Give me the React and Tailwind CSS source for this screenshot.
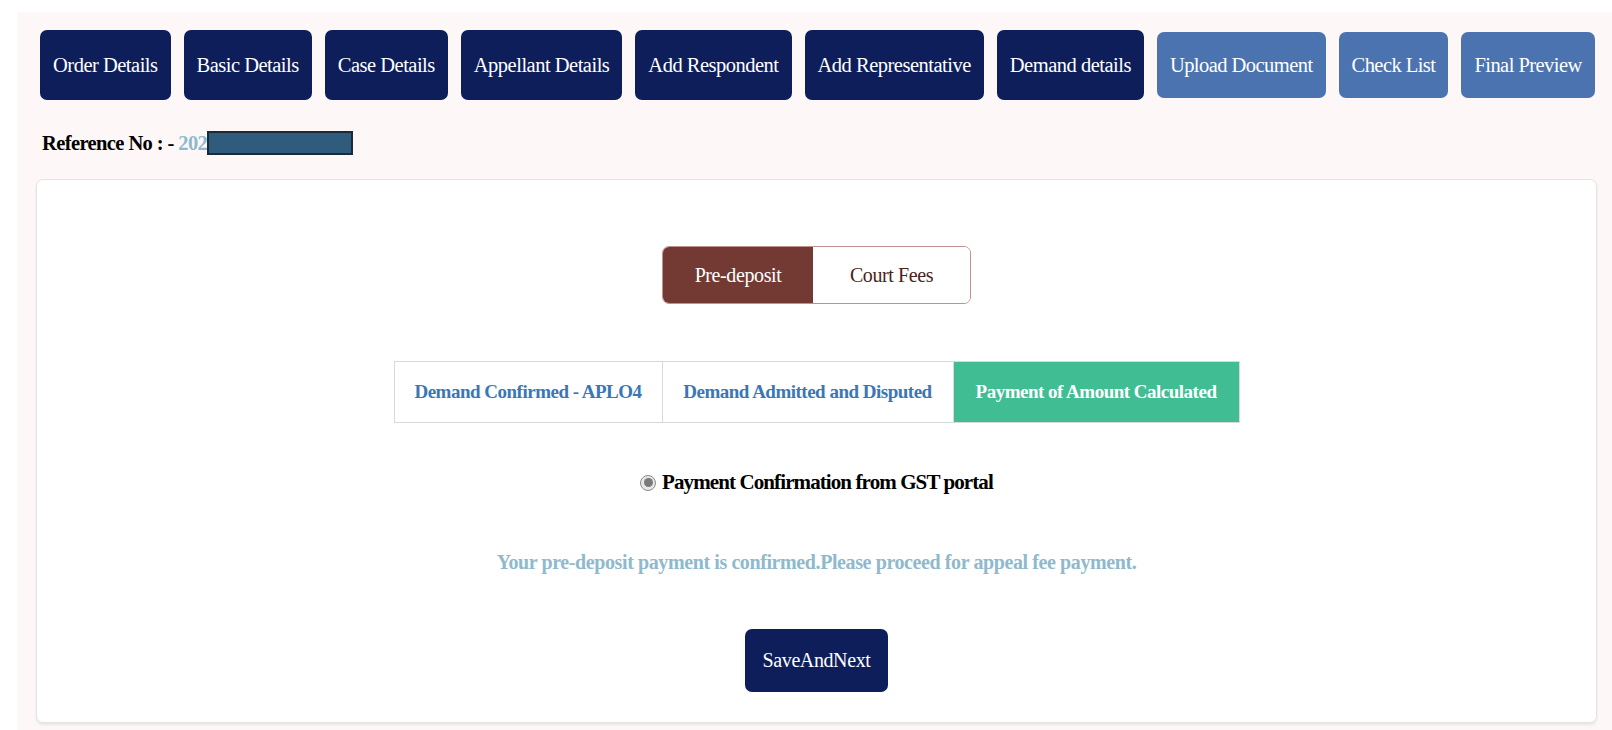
import React from "react";

const navItems = [
  { label: "Order Details", light: false },
  { label: "Basic Details", light: false },
  { label: "Case Details", light: false },
  { label: "Appellant Details", light: false },
  { label: "Add Respondent", light: false },
  { label: "Add Representative", light: false },
  { label: "Demand details", light: false },
  { label: "Upload Document", light: true },
  { label: "Check List", light: true },
  { label: "Final Preview", light: true },
];

export default function App() {
  return (
    <div className="min-h-screen bg-white pt-[12px] pl-[17px] font-['Liberation_Serif',serif]">
      <div className="min-h-[718px] bg-[#fdf8f7] pl-[19px] pr-[15px] pt-[18px]">
        <div className="flex items-center gap-[13px] pl-[4px]">
          {navItems.map((n) =>
            n.light ? (
              <div
                key={n.label}
                className="h-[66px] px-[13px] flex items-center rounded-[7px] bg-[#4a73b0] text-white text-[20.5px] tracking-[-0.55px] whitespace-nowrap"
              >
                {n.label}
              </div>
            ) : (
              <div
                key={n.label}
                className="h-[70px] px-[13px] flex items-center rounded-[7px] bg-[#0d1e5a] text-white text-[20.5px] tracking-[-0.5px] whitespace-nowrap"
              >
                {n.label}
              </div>
            )
          )}
        </div>

        <div className="flex items-center h-[24px] mt-[31px] pl-[6px] font-bold text-[20.5px] tracking-[-0.6px]">
          <span className="text-black">Reference No : -&nbsp;</span>
          <span className="text-[#8fb9cc]">202</span>
          <span className="inline-block w-[146px] h-[24px] bg-[#2f5c7c] border-2 border-[#1a2a36]"></span>
        </div>

        <div className="mt-[24px] bg-white border border-[#e4e4e4] rounded-[7px] shadow-[0_2px_3px_rgba(0,0,0,0.08)] flex flex-col items-center pt-[66px] pb-[30px]">
          <div className="flex h-[58px] rounded-[7px] border border-[#c0928d] overflow-hidden text-[20px] tracking-[-0.4px]">
            <div className="w-[150px] flex items-center justify-center bg-[#733a33] text-white">
              Pre-deposit
            </div>
            <div className="w-[157px] flex items-center justify-center bg-white text-[#4a2420]">
              Court Fees
            </div>
          </div>

          <div className="mt-[57px] flex h-[62px] border border-[#d9d9d9] text-[19px] font-bold tracking-[-0.5px]">
            <div className="w-[268px] flex items-center justify-center text-[#3a77b6] border-r border-[#d9d9d9]">
              Demand Confirmed - APLO4
            </div>
            <div className="w-[291px] flex items-center justify-center text-[#3a77b6] border-r border-[#d9d9d9]">
              Demand Admitted and Disputed
            </div>
            <div className="w-[285px] flex items-center justify-center bg-[#41bd93] text-white">
              Payment of Amount Calculated
            </div>
          </div>

          <div className="mt-[44px] flex items-center gap-[6px]">
            <span className="w-[16px] h-[16px] rounded-full border border-[#8a8a8a] bg-[#e8e8e8] flex items-center justify-center">
              <span className="w-[9px] h-[9px] rounded-full bg-[#7a7a7a]"></span>
            </span>
            <span className="text-[21px] font-bold text-black tracking-[-0.9px]">
              Payment Confirmation from GST portal
            </span>
          </div>

          <div className="mt-[48px] text-[20px] font-bold text-[#8fb9cc] tracking-[-0.4px]">
            Your pre-deposit payment is confirmed.Please proceed for appeal fee payment.
          </div>

          <div className="mt-[52px] h-[63px] w-[143px] flex items-center justify-center rounded-[7px] bg-[#0d1e5a] text-white text-[20px] tracking-[-0.4px]">
            SaveAndNext
          </div>
        </div>
      </div>
    </div>
  );
}
